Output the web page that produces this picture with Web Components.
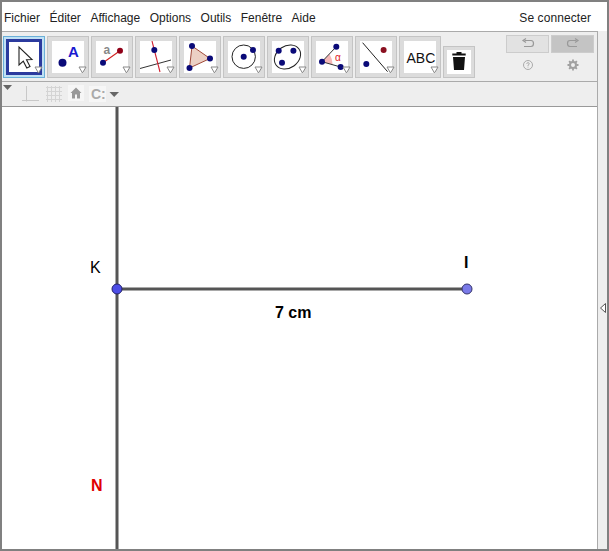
<!DOCTYPE html>
<html><head><meta charset="utf-8"><title>GeoGebra</title>
<style>
html,body{margin:0;padding:0;background:#fff}
body{width:609px;height:551px;overflow:hidden;font-family:"Liberation Sans",Arial,sans-serif}
</style></head><body>
<geo-app>
  <menu-bar></menu-bar>
  <app-body>
    <main-col>
      <tool-bar>
        <tool-button selected><svg viewBox="0 0 30 30" width="30" height="30"><path d="M10 5 L10 23 L14.300 19.200 L17.800 26 L21 24.500 L17.500 17.800 L23 17.500 Z" fill="#fff" stroke="#222" stroke-width="1.100" stroke-linejoin="miter"/></svg></tool-button>
        <tool-button><svg viewBox="0 0 32 32" width="32" height="32"><circle cx="10.500" cy="21.700" r="4" fill="#0a0a78"/><text x="16" y="16" font-family="Liberation Sans" font-size="15" font-weight="bold" fill="#1a1ad0">A</text></svg></tool-button>
        <tool-button><svg viewBox="0 0 32 32" width="32" height="32"><line x1="7" y1="21.700" x2="24" y2="9.700" stroke="#d02020" stroke-width="1.100"/><circle cx="7" cy="21.700" r="3" fill="#0a0a78"/><circle cx="24" cy="9.700" r="3" fill="#900018"/><text x="7.500" y="13" font-family="Liberation Sans" font-size="12" font-weight="bold" fill="#888">a</text></svg></tool-button>
        <tool-button><svg viewBox="0 0 32 32" width="32" height="32"><line x1="0" y1="27.500" x2="31" y2="19" stroke="#333" stroke-width="1"/><line x1="12" y1="0" x2="20" y2="31" stroke="#d02030" stroke-width="1.100"/><circle cx="14.300" cy="9" r="3" fill="#0a0a78"/></svg></tool-button>
        <tool-button><svg viewBox="0 0 32 32" width="32" height="32"><path d="M8 5 L5.500 27 L26 17.500 Z" fill="#ecd0c4" stroke="#a04a3a" stroke-width="1"/><circle cx="8" cy="5" r="3" fill="#0a0a78"/><circle cx="5.500" cy="27" r="3" fill="#0a0a78"/><circle cx="26" cy="17.500" r="3" fill="#0a0a78"/></svg></tool-button>
        <tool-button><svg viewBox="0 0 32 32" width="32" height="32"><circle cx="15.700" cy="15.700" r="11.700" fill="none" stroke="#222" stroke-width="1"/><circle cx="15.700" cy="15.700" r="3" fill="#0a0a78"/><circle cx="25" cy="9" r="3" fill="#0a0a78"/></svg></tool-button>
        <tool-button><svg viewBox="0 0 32 32" width="32" height="32"><ellipse cx="15.500" cy="16" rx="14" ry="11" transform="rotate(-35 15.500 16)" fill="none" stroke="#222" stroke-width="1"/><circle cx="6.700" cy="9.700" r="3" fill="#0a0a78"/><circle cx="21.400" cy="9.700" r="3" fill="#0a0a78"/><circle cx="10" cy="21.700" r="3" fill="#0a0a78"/></svg></tool-button>
        <tool-button><svg viewBox="0 0 32 32" width="32" height="32"><path d="M6 20.700 L13.500 13 Q16.500 18 16.600 23.500 Z" fill="#f6b8b8"/><line x1="6" y1="20.700" x2="20.300" y2="5.700" stroke="#333"/><line x1="6" y1="20.700" x2="24.600" y2="26" stroke="#333"/><circle cx="6" cy="20.700" r="3" fill="#0a0a78"/><circle cx="20.300" cy="5.700" r="3" fill="#0a0a78"/><circle cx="24.600" cy="26" r="3" fill="#0a0a78"/><text x="19" y="20" font-family="Liberation Sans" font-size="10" fill="#e02020">α</text></svg></tool-button>
        <tool-button><svg viewBox="0 0 32 32" width="32" height="32"><line x1="2.600" y1="1.700" x2="27.600" y2="30.700" stroke="#222" stroke-width="1"/><circle cx="6.300" cy="23" r="3" fill="#0a0a78"/><circle cx="23.600" cy="9" r="3" fill="#8a1020"/></svg></tool-button>
        <tool-button><svg viewBox="0 0 32 32" width="32" height="32"><text x="2.500" y="21.500" font-family="Liberation Sans" font-size="14" fill="#111">ABC</text></svg></tool-button>
        <tool-button trash><svg viewBox="0 0 24 24" width="24" height="24"><path d="M9.500 2h5v1.500h4.200v2H5.300v-2h4.200z M6 7h12l-1 13H7z" fill="#111"/></svg></tool-button>
        <undo-panel></undo-panel>
      </tool-bar>
      <style-bar></style-bar>
      <geo-canvas></geo-canvas>
    </main-col>
    <side-strip></side-strip>
  </app-body>
</geo-app>
<script>
function def(name, html){
  customElements.define(name, class extends HTMLElement{
    constructor(){super();this.attachShadow({mode:'open'}).innerHTML=html;}
  });
}
def('geo-app',`<style>
:host{display:flex;flex-direction:column;box-sizing:border-box;width:609px;height:551px;border:2px solid #808080;background:#fff;overflow:hidden}
</style><slot></slot>`);
def('app-body',`<style>:host{display:flex;flex:1;min-height:0}</style><slot></slot>`);
def('main-col',`<style>:host{display:flex;flex-direction:column;flex:1;min-width:0;border-top:1px solid #aaa}</style><slot></slot>`);
def('side-strip',`<style>
:host{display:block;flex:none;width:10px;box-sizing:border-box;background:#eee;border-left:1px solid #aaa;padding:271px 0 0 1px}
svg{display:block}
</style><svg width="8" height="12" viewBox="0 0 8 12"><path d="M6.500 1.500V10.500L1.500 6Z" fill="#fff" stroke="#555"/></svg>`);
def('menu-bar',`<style>
:host{display:flex;flex:none;height:26px;padding:3px 16px 0 2px;background:#fff;align-items:center;font:12px "Liberation Sans",Arial,sans-serif;color:#222;justify-content:space-between}
.l{display:flex;gap:9.5px}
span{display:block;white-space:nowrap}
.r{letter-spacing:.08px}
</style><div class="l"><span>Fichier</span><span>Éditer</span><span>Affichage</span><span>Options</span><span>Outils</span><span>Fenêtre</span><span>Aide</span></div><span class="r">Se connecter</span>`);
def('tool-bar',`<style>
:host{display:flex;flex:none;box-sizing:border-box;height:50px;border-bottom:1px solid #aaa;background:#eee;align-items:flex-start;gap:2px;padding:4px 0 0 1px;position:relative}
</style><slot></slot>`);
def('tool-button',`<style>
:host{display:flex;flex:none;width:42px;height:42px;box-sizing:border-box;background:#dcdcdc;border:1px solid #c4c4c4;align-items:center;justify-content:center;position:relative}
.i{width:32px;height:32px;box-sizing:content-box;background:#fff;display:flex;align-items:center;justify-content:center;overflow:hidden}
:host([selected]){background:#bfe0f4;border:1px solid #6ab0d8}
:host([selected]) .i{width:30px;height:30px;border:3px solid #2b3a9e}
:host([trash]){width:32px;height:32px;margin-top:10px}
:host([trash]) .i{width:24px;height:24px}
svg.a{position:absolute;right:1px;bottom:3px;width:10px;height:8px}
:host([trash]) svg.a{display:none}
</style><div class="i"><slot></slot></div><svg class="a" viewBox="0 0 10 8"><path d="M2 1 H9 L5.500 7 Z" fill="#fff" stroke="#888" stroke-width="1"/></svg>`);
def('undo-panel',`<style>
:host{display:grid;grid-template-columns:43px 43px;column-gap:2px;position:absolute;left:504px;top:3px;justify-items:center}
.b{width:43px;height:18px;box-sizing:border-box;border:1px solid #ccc;background:#e2e2e2;display:flex;align-items:center;justify-content:center}
.b.d{background:#c4c4c4}
.s{margin-top:5px;height:14px}
svg{display:block}
</style>
<div class="b"><svg width="14" height="12" viewBox="0 0 14 12"><path d="M3.500 2.500 H10 Q12.500 2.500 12.500 5.500 Q12.500 8.500 10 8.500 H3" fill="none" stroke="#999" stroke-width="1.200"/><path d="M5 .5 L2 2.500 L5 4.500" fill="none" stroke="#999" stroke-width="1.200"/></svg></div>
<div class="b d"><svg width="14" height="12" viewBox="0 0 14 12"><path d="M10.500 2.500 H4 Q1.500 2.500 1.500 5.500 Q1.500 8.500 4 8.500 H11" fill="none" stroke="#999" stroke-width="1.200"/><path d="M9 .5 L12 2.500 L9 4.500" fill="none" stroke="#999" stroke-width="1.200"/></svg></div>
<div class="s"><svg width="14" height="14" viewBox="0 0 14 14"><circle cx="7" cy="7" r="4.500" fill="none" stroke="#aaa" stroke-width="1"/><path d="M5.700 5.800 Q5.800 4.700 7 4.700 Q8.300 4.700 8.300 5.800 Q8.300 6.500 7 7.200 V8 M7 8.700 V9.500" fill="none" stroke="#aaa"/></svg></div>
<div class="s"><svg width="14" height="14" viewBox="0 0 14 14"><circle cx="7" cy="7" r="3" fill="none" stroke="#a0a0a0" stroke-width="2"/><path d="M7 1.500v2M7 10.500v2M1.500 7h2M10.500 7h2M3.100 3.100l1.400 1.400M9.500 9.500l1.400 1.400M3.100 10.900l1.400-1.400M9.500 4.500l1.400-1.400" stroke="#a0a0a0" stroke-width="1.800"/></svg></div>`);
def('style-bar',`<style>
:host{display:flex;flex:none;box-sizing:border-box;height:25px;background:#eee;border-bottom:1px solid #999;align-items:center}
svg{display:block;flex:none}
.home{margin:-3px 0 0 5px;background:#f6f6f6;width:16px;height:16px;display:flex;align-items:center;justify-content:center}
.c{margin:-1px 0 0 5px;background:#f6f6f6;box-sizing:border-box;padding-left:2px;height:16px;width:17px;font:bold 14px "Liberation Sans",Arial,sans-serif;color:#aaa;line-height:16px;white-space:nowrap}
</style>
<svg width="12" height="8" viewBox="0 0 12 8" style="margin:-12px 0 0 0"><path d="M1 1H10L5.500 6Z" fill="#666"/></svg>
<svg width="18" height="18" viewBox="0 0 18 18" style="margin-left:8px"><path d="M4.500 1V16.500M0 15.500H17" fill="none" stroke="#c8c8c8"/></svg>
<svg width="18" height="18" viewBox="0 0 18 18" style="margin-left:5px"><path d="M1 2.500H17M1 6.500H17M1 10.500H17M1 14.500H17M2.500 1V17M6.500 1V17M10.500 1V17M14.500 1V17" fill="none" stroke="#d4d4d4"/></svg>
<div class="home"><svg width="12" height="12" viewBox="0 0 12 12"><path d="M6 .5L.5 6H2V11.500H5V7.500H7V11.500H10V6H11.500Z" fill="#999"/></svg></div>
<div class="c">C:</div>
<svg width="11" height="7" viewBox="0 0 11 7" style="margin-left:3px"><path d="M.5 1H10L5.200 6Z" fill="#666"/></svg>`);
def('geo-canvas',`<style>
:host{display:block;flex:1;position:relative;background:#fff;font:16px "Liberation Sans",Arial,sans-serif;color:#000;overflow:hidden}
svg{position:absolute;left:0;top:0}
span{position:absolute;line-height:18px;white-space:nowrap}
</style>
<svg width="595" height="442" viewBox="2 107 595 442">
<line x1="117" y1="107" x2="117" y2="549" stroke="#555" stroke-width="3"/>
<line x1="117" y1="289" x2="467" y2="289" stroke="#555" stroke-width="3"/>
<circle cx="117" cy="289" r="5" fill="#4d4de6" stroke="#22226a" stroke-width="1"/>
<circle cx="467" cy="289" r="5" fill="#7a7ae8" stroke="#33336a" stroke-width="1"/>
</svg>
<span style="left:88px;top:152px">K</span>
<span style="left:462px;top:147px;font-weight:bold">I</span>
<span style="left:273px;top:197px;font-weight:bold">7 cm</span>
<span style="left:89px;top:370px;color:#e00000;font-weight:bold">N</span>`);
</script>
</body></html>
